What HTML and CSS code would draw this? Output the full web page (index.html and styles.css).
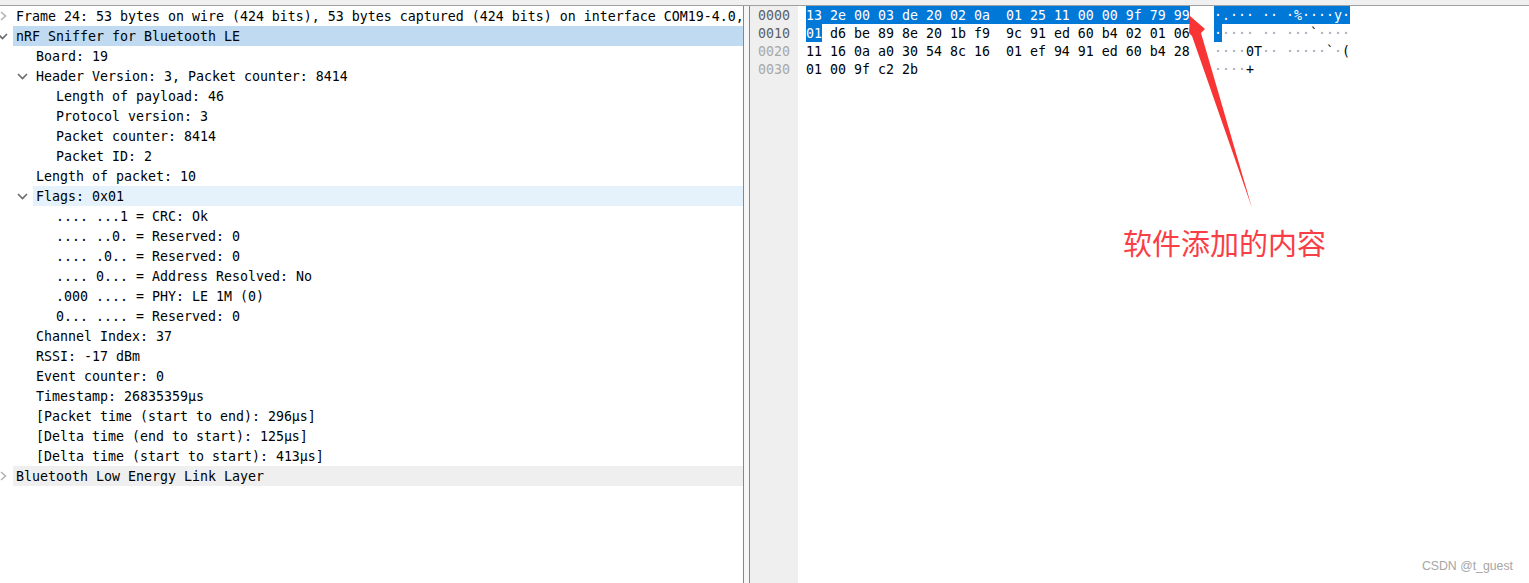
FILE: index.html
```html
<!DOCTYPE html>
<html lang="zh">
<head>
<meta charset="utf-8">
<title>Packet details</title>
<link rel="stylesheet" href="styles.css">
</head>
<body>
<div class="app">
  <div class="topstrip"></div>
  <main class="panes">
    <section class="tree">
      <div class="row"><svg class="twist" viewBox="0 0 13 20"><path class="chev-closed" d="M1 6 L5.5 10 L1 14"/></svg><div class="label">Frame 24: 53 bytes on wire (424 bits), 53 bytes captured (424 bits) on interface COM19-4.0,</div></div>
      <div class="row"><svg class="twist" viewBox="0 0 13 20"><path class="chev" d="M-2 8 L2.5 12.5 L7 8"/></svg><div class="label sel">nRF Sniffer for Bluetooth LE</div></div>
      <div class="row d1"><span class="twist"></span><div class="label">Board: 19</div></div>
      <div class="row d1"><svg class="twist" viewBox="0 0 13 20"><path class="chev" d="M-2 8 L2.5 12.5 L7 8"/></svg><div class="label">Header Version: 3, Packet counter: 8414</div></div>
      <div class="row d2"><span class="twist"></span><div class="label">Length of payload: 46</div></div>
      <div class="row d2"><span class="twist"></span><div class="label">Protocol version: 3</div></div>
      <div class="row d2"><span class="twist"></span><div class="label">Packet counter: 8414</div></div>
      <div class="row d2"><span class="twist"></span><div class="label">Packet ID: 2</div></div>
      <div class="row d1"><span class="twist"></span><div class="label">Length of packet: 10</div></div>
      <div class="row d1"><svg class="twist" viewBox="0 0 13 20"><path class="chev" d="M-2 8 L2.5 12.5 L7 8"/></svg><div class="label hover">Flags: 0x01</div></div>
      <div class="row d2"><span class="twist"></span><div class="label">.... ...1 = CRC: Ok</div></div>
      <div class="row d2"><span class="twist"></span><div class="label">.... ..0. = Reserved: 0</div></div>
      <div class="row d2"><span class="twist"></span><div class="label">.... .0.. = Reserved: 0</div></div>
      <div class="row d2"><span class="twist"></span><div class="label">.... 0... = Address Resolved: No</div></div>
      <div class="row d2"><span class="twist"></span><div class="label">.000 .... = PHY: LE 1M (0)</div></div>
      <div class="row d2"><span class="twist"></span><div class="label">0... .... = Reserved: 0</div></div>
      <div class="row d1"><span class="twist"></span><div class="label">Channel Index: 37</div></div>
      <div class="row d1"><span class="twist"></span><div class="label">RSSI: -17 dBm</div></div>
      <div class="row d1"><span class="twist"></span><div class="label">Event counter: 0</div></div>
      <div class="row d1"><span class="twist"></span><div class="label">Timestamp: 26835359μs</div></div>
      <div class="row d1"><span class="twist"></span><div class="label">[Packet time (start to end): 296μs]</div></div>
      <div class="row d1"><span class="twist"></span><div class="label">[Delta time (end to start): 125μs]</div></div>
      <div class="row d1"><span class="twist"></span><div class="label">[Delta time (start to start): 413μs]</div></div>
      <div class="row"><svg class="twist" viewBox="0 0 13 20"><path class="chev-closed" d="M1 6 L5.5 10 L1 14"/></svg><div class="label group">Bluetooth Low Energy Link Layer</div></div>
    </section>
    <div class="splitter"></div>
    <section class="bytes">
      <div class="gutter">
        <div class="off">0000</div>
        <div class="off">0010</div>
        <div class="off faint">0020</div>
        <div class="off faint">0030</div>
      </div>
      <div class="hex">
        <div class="line"><span class="mark">13 2e 00 03 de 20 02 0a  01 25 11 00 00 9f 79 99</span></div>
        <div class="line"><span class="mark">01</span> d6 be 89 8e 20 1b f9  9c 91 ed 60 b4 02 01 06</div>
        <div class="line">11 16 0a a0 30 54 8c 16  01 ef 94 91 ed 60 b4 28</div>
        <div class="line">01 00 9f c2 2b</div>
      </div>
      <div class="ascii">
        <div class="line"><span class="mark">·.··· ·· ·%····y·</span></div>
        <div class="line"><span class="mark">·</span><span class="np">···· ·· ···</span>`<span class="np">····</span></div>
        <div class="line"><span class="np">····</span>0T<span class="np">·· ·····</span>`<span class="np">·</span>(</div>
        <div class="line"><span class="np">····</span>+</div>
      </div>
    </section>
  </main>
</div>
<svg class="arrow" viewBox="0 0 1529 583"><polygon points="1190,16 1205,29 1201,33 1252,208 1192,36 1189,33"/></svg>
<div class="note">软件添加的内容</div>
<div class="mark-csdn">CSDN @t_guest</div>
</body>
</html>
```
FILE: styles.css
```css
html, body {
  margin: 0;
  height: 100%;
  overflow: hidden;
  background: #fff;
}
body {
  font-family: "DejaVu Sans Mono", "Liberation Mono", monospace;
  font-size: 13.29px;
  color: #000;
}
.app {
  display: flex;
  flex-direction: column;
  height: 583px;
}
.topstrip {
  height: 5px;
  flex: none;
  background: #f0f0f0;
  border-bottom: 1px solid #a0a0a0;
}
.panes {
  flex: 1;
  display: flex;
  min-height: 0;
}
.tree {
  width: 743px;
  flex: none;
  overflow: hidden;
  border-right: 1px solid #828790;
}
.row {
  display: flex;
  height: 20px;
  line-height: 20px;
  white-space: pre;
}
.d1 { padding-left: 20px; }
.d2 { padding-left: 40px; }
.twist {
  width: 13px;
  height: 20px;
  flex: none;
  overflow: visible;
}
.chev, .chev-closed {
  fill: none;
  stroke-width: 1.6;
}
.chev { stroke: #6a6a6a; }
.chev-closed { stroke: #b4b4b4; }
.label {
  flex: 1;
  min-width: 0;
  padding-left: 3px;
  line-height: 21px;
}
.sel { background: #bfdaf1; }
.hover { background: #e5f1fb; }
.group { background: #efefef; }
.splitter {
  width: 5px;
  flex: none;
  background: #f7f7f7;
}
.bytes {
  flex: 1;
  display: flex;
  border-left: 1px solid #828790;
  line-height: 20px;
}
.gutter {
  width: 40px;
  padding-left: 8px;
  flex: none;
  background: #efefef;
}
.off { height: 18px; color: #5f5f5f; }
.faint { color: #a8a8a8; }
.hex {
  width: 384px;
  margin-left: 8px;
  flex: none;
}
.ascii {
  margin-left: 24px;
  flex: none;
}
.line {
  height: 18px;
  white-space: pre;
}
.mark {
  display: inline-block;
  vertical-align: top;
  height: 18px;
  background: #0078d7;
  color: #fff;
}
.np { color: #a8a8a8; }
.arrow {
  position: absolute;
  left: 0;
  top: 0;
  width: 1529px;
  height: 583px;
  pointer-events: none;
}
.arrow polygon { fill: #f93434; }
.note {
  position: absolute;
  left: 1123px;
  top: 222px;
  font-family: "Noto Sans CJK SC", "Liberation Sans", sans-serif;
  font-size: 29px;
  line-height: 40px;
  color: #f93e46;
  white-space: nowrap;
}
.mark-csdn {
  position: absolute;
  right: 16px;
  top: 558px;
  font-family: "Liberation Sans", sans-serif;
  font-size: 12.3px;
  line-height: 16px;
  color: #a6a6a6;
}
```
